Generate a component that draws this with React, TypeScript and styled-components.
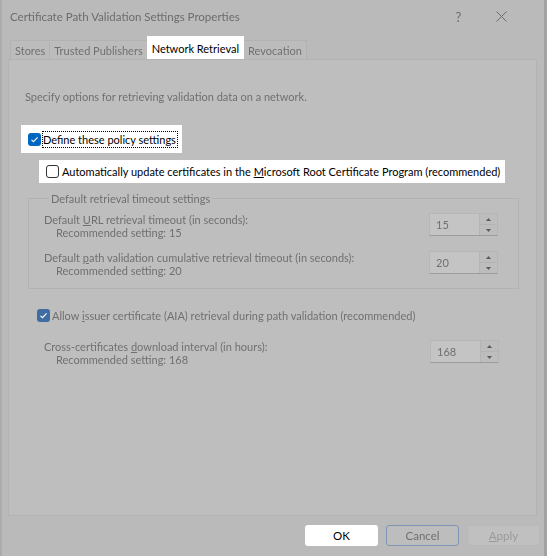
import React from 'react';
import styled, { createGlobalStyle, css } from 'styled-components';

const GlobalStyle = createGlobalStyle`
  html, body {
    margin: 0;
    padding: 0;
    background: #bababa;
  }
  * {
    box-sizing: border-box;
  }
`;

const font = `Lato, "Noto Sans", sans-serif`;
const dimText = '#707070';

const dimmed = css`
  color: ${dimText};
  filter: blur(0.35px);
`;

const Dialog = styled.div`
  width: 547px;
  height: 556px;
  background: #bababa;
  border-left: 2px solid #acacac;
  border-right: 3px solid #a2a2a2;
  display: flex;
  flex-direction: column;
  font-family: ${font};
  font-size: 11px;
`;

const TitleBar = styled.div`
  height: 33px;
  display: flex;
  align-items: center;
  padding: 0 21px 0 8px;
  ${dimmed};
`;

const Title = styled.span`
  flex: 1;
  font-size: 11.5px;
  color: #6c6c6c;
`;

const TitleButton = styled.span`
  width: 43px;
  display: flex;
  justify-content: center;
  font-size: 13px;
  color: #6c6c6c;
`;

const TabStrip = styled.div`
  display: flex;
  align-items: flex-end;
  height: 26px;
  padding-left: 8px;
`;

const Tab = styled.div<{ $active?: boolean }>`
  height: ${p => (p.$active ? 23 : 19)}px;
  padding: 0 ${p => (p.$active ? 4 : 4)}px;
  display: flex;
  align-items: center;
  border: 1px solid #b2b2b2;
  border-bottom: none;
  margin-right: -1px;
  ${p =>
    p.$active
      ? css`
          background: #ffffff;
          color: #000000;
          border-color: #ffffff;
          position: relative;
          z-index: 1;
        `
      : css`
          background: #bcbcbc;
          ${dimmed};
        `}
`;

const Panel = styled.div`
  margin: 0 7px 0 6px;
  height: 457px;
  background: #bebebe;
  border: 1px solid #b3b3b3;
  padding: 29px 0 0 0;
  display: flex;
  flex-direction: column;
  align-items: flex-start;
`;

const Text = styled.div<{ $indent?: number }>`
  line-height: 13px;
  padding-left: ${p => p.$indent ?? 0}px;
  white-space: nowrap;
  ${dimmed};
`;

const Description = styled(Text)`
  line-height: 15px;
  margin-left: 16px;
`;

const Highlight = styled.label<{ $left: number; $top: number; $h: number; $pad: number; $gap: number }>`
  margin-left: ${p => p.$left}px;
  margin-top: ${p => p.$top}px;
  height: ${p => p.$h}px;
  padding: 0 5px 0 ${p => p.$pad}px;
  background: #ffffff;
  display: flex;
  align-items: center;
  gap: ${p => p.$gap}px;
  color: #000000;
  white-space: nowrap;
`;

const Box = styled.span<{ $checked?: boolean; $dim?: boolean }>`
  width: 13px;
  height: 13px;
  border-radius: 3px;
  flex: none;
  display: flex;
  align-items: center;
  justify-content: center;
  ${p =>
    p.$checked
      ? css`
          background: ${p.$dim ? '#3f6da3' : '#0067c0'};
        `
      : css`
          border: 1px solid #333333;
          background: #ffffff;
        `}
  ${p => p.$dim && css`filter: blur(0.35px);`}
`;

const Focus = styled.span`
  outline: 1px dotted #000000;
  line-height: 15px;
  padding-right: 1px;
`;

const Check = ({ checked, dim }: { checked?: boolean; dim?: boolean }) => (
  <Box $checked={checked} $dim={dim}>
    {checked && (
      <svg width="9" height="9" viewBox="0 0 9 9">
        <path d="M1.5 4.8 L3.5 6.7 L7.6 2.3" fill="none" stroke="#ffffff" strokeWidth="1.1" />
      </svg>
    )}
  </Box>
);

const Group = styled.fieldset`
  margin: 8px 0 0 19px;
  width: 491px;
  padding: 0 20px 11px 15px;
  border: 1px solid #b2b2b2;
  display: flex;
  flex-direction: column;
  gap: 12px;
`;

const Legend = styled.legend`
  padding: 0 2px;
  margin-left: 5px;
  line-height: 15px;
  ${dimmed};
`;

const SettingRow = styled.div<{ $top?: number }>`
  display: flex;
  justify-content: space-between;
  align-items: flex-start;
  margin-top: ${p => p.$top ?? 0}px;
`;

const Labels = styled.div`
  display: flex;
  flex-direction: column;
`;

const Spin = styled.div`
  width: 69px;
  height: 23px;
  display: flex;
  background: #c4c4c4;
  border: 1px solid #b6b6b6;
  border-bottom-color: #9c9c9c;
  filter: blur(0.35px);
`;

const SpinValue = styled.div`
  flex: 1;
  padding-left: 6px;
  line-height: 21px;
  color: ${dimText};
`;

const SpinButtons = styled.div`
  width: 18px;
  display: flex;
  flex-direction: column;
  border-left: 1px solid #b4b4b4;
`;

const SpinButton = styled.div`
  flex: 1;
  display: flex;
  align-items: center;
  justify-content: center;
  background: #bdbdbd;
  & + & {
    border-top: 1px solid #b4b4b4;
  }
`;

const Arrow = ({ up }: { up?: boolean }) => (
  <svg width="5" height="3" viewBox="0 0 5 3">
    <path d={up ? 'M0 3 L2.5 0 L5 3 Z' : 'M0 0 L2.5 3 L5 0 Z'} fill="#5a5a5a" />
  </svg>
);

const SpinBox = ({ value }: { value: string }) => (
  <Spin>
    <SpinValue>{value}</SpinValue>
    <SpinButtons>
      <SpinButton>
        <Arrow up />
      </SpinButton>
      <SpinButton>
        <Arrow />
      </SpinButton>
    </SpinButtons>
  </Spin>
);

const CheckRow = styled.div`
  display: flex;
  align-items: center;
  gap: 2px;
  margin: 20px 0 0 28px;
  line-height: 15px;
`;

const Interval = styled.div`
  width: 491px;
  margin: 18px 0 0 19px;
  padding: 0 20px 0 16px;
`;

const Footer = styled.div`
  display: flex;
  justify-content: flex-end;
  gap: 8px;
  padding: 9px 4px 0 0;
`;

const Button = styled.div<{ $kind: 'ok' | 'cancel' | 'apply' }>`
  width: 73px;
  height: 21px;
  border-radius: 3px;
  display: flex;
  align-items: center;
  justify-content: center;
  font-size: 11.5px;
  ${p =>
    p.$kind === 'ok'
      ? css`
          background: #ffffff;
          color: #000000;
        `
      : p.$kind === 'cancel'
        ? css`
            background: #bdbdbd;
            border: 1px solid #7f95b5;
            ${dimmed};
          `
        : css`
            background: #c0c0c0;
            border: 1px solid #b8b8b8;
            color: #9a9a9a;
            filter: blur(0.35px);
          `}
`;

const Underline = styled.span`
  text-decoration: underline;
`;

export default function App() {
  return (
    <>
      <GlobalStyle />
      <Dialog>
        <TitleBar>
          <Title>Certificate Path Validation Settings Properties</Title>
          <TitleButton>?</TitleButton>
          <TitleButton>
            <svg width="11" height="11" viewBox="0 0 11 11">
              <path d="M0.5 0.5 L10.5 10.5 M10.5 0.5 L0.5 10.5" stroke="#6c6c6c" strokeWidth="1" />
            </svg>
          </TitleButton>
        </TitleBar>
        <TabStrip>
          <Tab>Stores</Tab>
          <Tab>Trusted Publishers</Tab>
          <Tab $active>Network Retrieval</Tab>
          <Tab>Revocation</Tab>
        </TabStrip>
        <Panel>
          <Description>Specify options for retrieving validation data on a network.</Description>
          <Highlight $left={12} $top={21} $h={28} $pad={7} $gap={2}>
            <Check checked />
            <Focus>Define these policy settings</Focus>
          </Highlight>
          <Highlight $left={30} $top={7} $h={23} $pad={7} $gap={3}>
            <Check />
            <span>
              Automatically update certificates in the <Underline>M</Underline>icrosoft Root
              Certificate Program (recommended)
            </span>
          </Highlight>
          <Group>
            <Legend>Default retrieval timeout settings</Legend>
            <SettingRow $top={7}>
              <Labels>
                <Text>
                  Default <Underline>U</Underline>RL retrieval timeout (in seconds):
                </Text>
                <Text $indent={12}>Recommended setting: 15</Text>
              </Labels>
              <SpinBox value="15" />
            </SettingRow>
            <SettingRow>
              <Labels>
                <Text>
                  Default <Underline>p</Underline>ath validation cumulative retrieval timeout (in
                  seconds):
                </Text>
                <Text $indent={12}>Recommended setting: 20</Text>
              </Labels>
              <SpinBox value="20" />
            </SettingRow>
          </Group>
          <CheckRow>
            <Check checked dim />
            <Text>
              Allow <Underline>i</Underline>ssuer certificate (AIA) retrieval during path
              validation (recommended)
            </Text>
          </CheckRow>
          <Interval>
            <SettingRow>
              <Labels>
                <Text>
                  Cross-certificates <Underline>d</Underline>ownload interval (in hours):
                </Text>
                <Text $indent={12}>Recommended setting: 168</Text>
              </Labels>
              <SpinBox value="168" />
            </SettingRow>
          </Interval>
        </Panel>
        <Footer>
          <Button $kind="ok">OK</Button>
          <Button $kind="cancel">Cancel</Button>
          <Button $kind="apply">
            <span>
              <Underline>A</Underline>pply
            </span>
          </Button>
        </Footer>
      </Dialog>
    </>
  );
}
